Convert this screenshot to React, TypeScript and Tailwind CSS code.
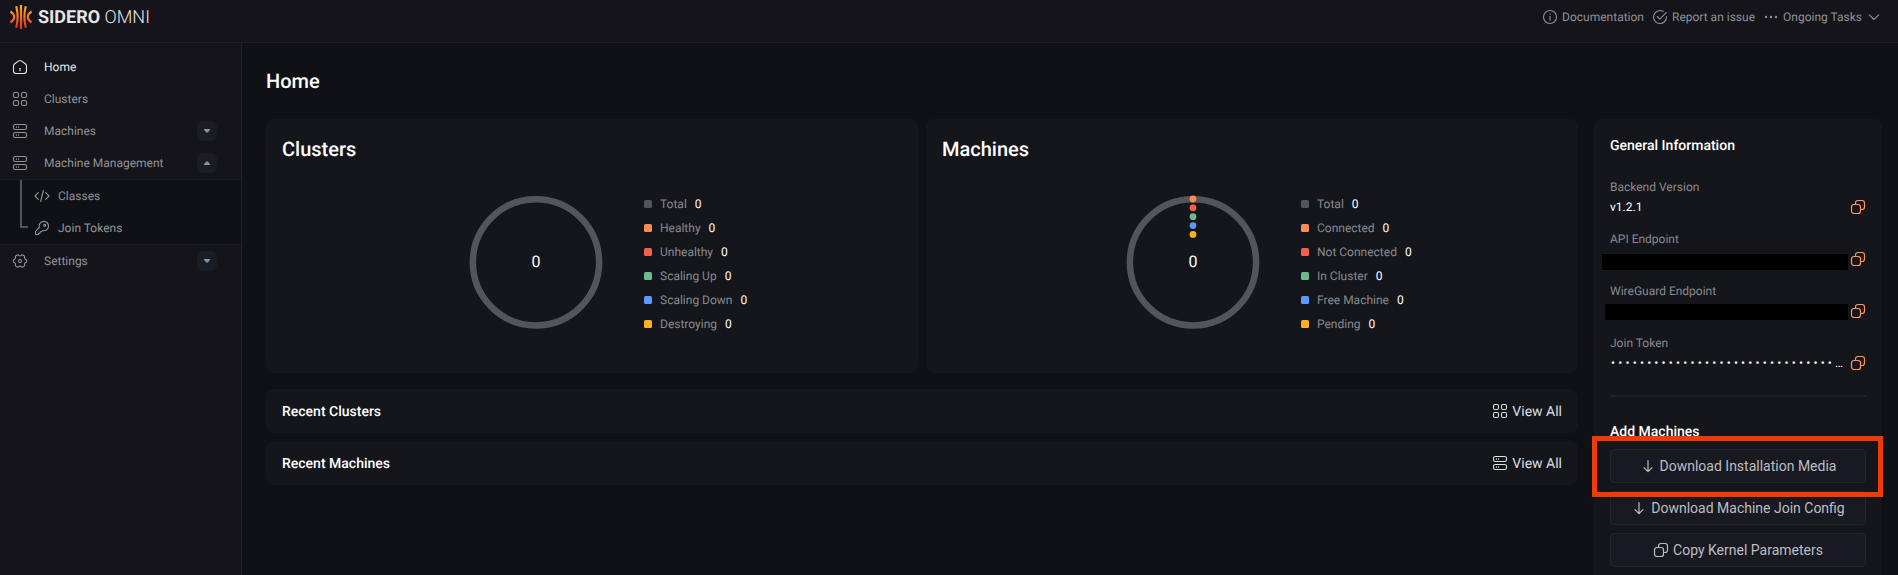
import type { ReactNode } from "react";

type IconProps = { className?: string };

function Svg({ className = "size-4", children, sw = 1.1 }: { className?: string; children: ReactNode; sw?: number }) {
  return (
    <svg viewBox="0 0 16 16" className={`shrink-0 ${className}`} fill="none" stroke="currentColor" strokeWidth={sw} strokeLinecap="round" strokeLinejoin="round">
      {children}
    </svg>
  );
}

const HomeIcon = ({ className }: IconProps) => (
  <Svg className={className}>
    <path d="M1.500 7.200c0-1 .4-1.800 1.200-2.400L6.400 2.100c1-.7 2.200-.7 3.200 0l3.700 2.700c.8.6 1.200 1.400 1.200 2.400v4.600c0 1.600-1.100 2.700-2.700 2.700H4.200c-1.600 0-2.700-1.100-2.700-2.700z" />
    <path d="M8 9.300v2.400" />
  </Svg>
);
const GridIcon = ({ className }: IconProps) => (
  <Svg className={className}>
    <rect x="1.500" y="1.500" width="5" height="5" rx="1.400" />
    <rect x="9.500" y="1.500" width="5" height="5" rx="1.400" />
    <rect x="1.500" y="9.500" width="5" height="5" rx="1.400" />
    <rect x="9.500" y="9.500" width="5" height="5" rx="1.400" />
  </Svg>
);
const ServerIcon = ({ className }: IconProps) => (
  <Svg className={className}>
    <rect x="1.500" y="1.500" width="13" height="5" rx="1.800" />
    <rect x="1.500" y="9.500" width="13" height="5" rx="1.800" />
    <path d="M4.500 3.700v.6M6.500 3.700v.6M4.500 11.700v.6M6.500 11.700v.6" />
  </Svg>
);
const CodeIcon = ({ className }: IconProps) => (
  <Svg className={className}>
    <path d="M4.300 4.700 1 8l3.300 3.300M11.700 4.700 15 8l-3.300 3.300M9.300 2.500l-2.600 11" />
  </Svg>
);
const KeyIcon = ({ className }: IconProps) => (
  <Svg className={className}>
    <path d="M5.300 7.300a4.700 4.700 0 1 1 3.300 3.300L7.500 11.700H6v1.500H4.500v1c0 .2-.1.300-.3.300H2c-.3 0-.5-.2-.5-.5v-2.200c0-.3.100-.5.300-.7z" />
    <circle cx="10.700" cy="5.300" r="1" />
  </Svg>
);
const GearIcon = ({ className }: IconProps) => (
  <Svg className={className}>
    <path d="M5.200 2.100c.6-.4 1.200-.3 1.600.2.700.7 1.700.7 2.400 0 .4-.5 1-.6 1.600-.2l1.200.7c.6.400.8.900.6 1.600-.2.900.3 1.700 1.200 2 .6.200.9.600.9 1.200v.8c0 .6-.3 1-.9 1.200-.9.300-1.400 1.100-1.200 2 .2.700 0 1.200-.6 1.600l-1.200.7c-.6.400-1.200.3-1.600-.2-.7-.7-1.700-.7-2.400 0-.4.500-1 .6-1.600.2L4 13.200c-.6-.4-.8-.9-.6-1.600.2-.9-.3-1.700-1.200-2-.6-.2-.9-.6-.9-1.200v-.8c0-.6.300-1 .9-1.200.9-.3 1.400-1.100 1.200-2-.2-.7 0-1.200.6-1.600z" />
    <circle cx="8" cy="8" r="1.500" />
  </Svg>
);
const InfoIcon = ({ className }: IconProps) => (
  <Svg className={className}>
    <circle cx="8" cy="8" r="6.500" />
    <path d="M8 7.200v4M8 4.800v.2" />
  </Svg>
);
const CheckIcon = ({ className }: IconProps) => (
  <Svg className={className}>
    <path d="M14.500 7.600A6.500 6.500 0 1 1 11.300 2.400" />
    <path d="m5.200 7.500 2.600 2.600 6.400-6.500" />
  </Svg>
);
const DotsIcon = ({ className }: IconProps) => (
  <Svg className={className}>
    <g fill="currentColor" stroke="none">
      <circle cx="3" cy="8" r="1.200" />
      <circle cx="8" cy="8" r="1.200" />
      <circle cx="13" cy="8" r="1.200" />
    </g>
  </Svg>
);
const ChevronIcon = ({ className }: IconProps) => (
  <Svg className={className}>
    <path d="m3.300 5.800 4.700 4.700 4.700-4.700" />
  </Svg>
);
const CopyIcon = ({ className }: IconProps) => (
  <Svg className={className} sw={1.2}>
    <rect x="1.500" y="5.500" width="9" height="9" rx="2.600" />
    <path d="M5.500 5.300V4c0-1.500 1-2.500 2.500-2.500h4c1.500 0 2.500 1 2.500 2.500v4c0 1.500-1 2.500-2.500 2.500h-1.300" />
  </Svg>
);
const DownIcon = ({ className }: IconProps) => (
  <Svg className={className} sw={1.2}>
    <path d="M8 2.500v11M4 9.700l4 4 4-4" />
  </Svg>
);

function Logo() {
  return (
    <svg viewBox="0 0 24 24" className="size-6 shrink-0" fill="none" strokeWidth="2.200">
      <defs>
        <linearGradient id="flame" gradientUnits="userSpaceOnUse" x1="0" y1="0" x2="0" y2="24">
          <stop offset="0" stopColor="#ffb31a" />
          <stop offset="0.500" stopColor="#f3722b" />
          <stop offset="1" stopColor="#dc2a2a" />
        </linearGradient>
      </defs>
      <g stroke="url(#flame)">
        <path d="M11.990 0 12.010 24" />
        <path d="M7.200 1.300C9 8 9 16 7.200 22.700" />
        <path d="M16.800 1.300C15 8 15 16 16.800 22.700" />
        <path d="M1.400 6.500C6.500 9.700 6.500 14.300 1.400 17.500" />
        <path d="M22.600 6.500C17.500 9.700 17.500 14.300 22.600 17.500" />
      </g>
    </svg>
  );
}

function Toggle({ up }: { up?: boolean }) {
  return (
    <span className="flex size-5 items-center justify-center rounded-md bg-[#1b1d26] text-[#8f9096]">
      <svg viewBox="0 0 6 4" className="h-1 w-1.5" fill="currentColor">
        {up ? <path d="M3 0 6 3v1H0V3z" /> : <path d="M0 0h6v1L3 4 0 1z" />}
      </svg>
    </span>
  );
}

function NavItem({ icon, label, active, toggle }: { icon: ReactNode; label: string; active?: boolean; toggle?: "up" | "down" }) {
  return (
    <a className={`flex h-8 items-center pr-6 pl-3 ${active ? "text-[#e4e4e6]" : "text-[#939398]"}`}>
      {icon}
      <span className="ml-4 flex-1">{label}</span>
      {toggle && <Toggle up={toggle === "up"} />}
    </a>
  );
}

type Entry = { label: string; color: string };

const clusterEntries: Entry[] = [
  { label: "Total", color: "bg-[#54555b]" },
  { label: "Healthy", color: "bg-[#f98b54]" },
  { label: "Unhealthy", color: "bg-[#f45e4c]" },
  { label: "Scaling Up", color: "bg-[#6db88d]" },
  { label: "Scaling Down", color: "bg-[#5b98ff]" },
  { label: "Destroying", color: "bg-[#fbb021]" },
];
const machineEntries: Entry[] = [
  { label: "Total", color: "bg-[#54555b]" },
  { label: "Connected", color: "bg-[#f98b54]" },
  { label: "Not Connected", color: "bg-[#f45e4c]" },
  { label: "In Cluster", color: "bg-[#6db88d]" },
  { label: "Free Machine", color: "bg-[#5b98ff]" },
  { label: "Pending", color: "bg-[#fbb021]" },
];
const dotColors = ["#f98b54", "#f45e4c", "#6db88d", "#5b98ff", "#fbb021"];

function StatCard({ title, entries, dots, pad }: { title: string; entries: Entry[]; dots?: boolean; pad: string }) {
  return (
    <section className="flex h-[254px] flex-1 flex-col rounded-lg bg-[#15161b] px-4 pt-4">
      <h2 className="text-xl leading-7 font-medium text-white">{title}</h2>
      <div className={`mt-[29px] flex items-start ${pad}`}>
        <div className="relative mt-[3px] flex size-[134px] items-center justify-center">
          <svg viewBox="0 0 134 134" className="absolute inset-0 size-full">
            <circle cx="67" cy="67.300" r="63.100" fill="none" stroke="#54555b" strokeWidth="6.500" />
            {dots && dotColors.map((c, i) => <circle key={c} cx="67" cy={4 + i * 8.85} r="3.400" fill={c} />)}
          </svg>
          <span className="relative text-base text-white">0</span>
        </div>
        <ul className="ml-[41px] text-xs">
          {entries.map((e) => (
            <li key={e.label} className="flex h-6 items-center">
              <span className={`size-2 rounded-[1.500px] ${e.color}`} />
              <span className="ml-2 text-[#88898f]">{e.label}</span>
              <span className="ml-2 text-white">0</span>
            </li>
          ))}
        </ul>
      </div>
    </section>
  );
}

function RecentBar({ title, icon }: { title: string; icon: ReactNode }) {
  return (
    <section className="flex h-11 items-center justify-between rounded-lg bg-[#15161b] px-4">
      <h3 className="pt-0.5 text-sm font-medium text-white">{title}</h3>
      <a className="flex items-center gap-1 text-sm text-[#dedee0]">
        {icon}
        <span className="pt-0.5">View All</span>
      </a>
    </section>
  );
}

function InfoRow({ label, children }: { label: string; children: ReactNode }) {
  return (
    <div className="h-[52px] text-xs">
      <div className="h-5 leading-5 text-[#88898f]">{label}</div>
      <div className="flex h-5 items-center justify-between leading-5 text-white">
        <div className="min-w-0">{children}</div>
        <CopyIcon className="size-4 text-[#ff945c]" />
      </div>
    </div>
  );
}

function ActionButton({ icon, children }: { icon: ReactNode; children: ReactNode }) {
  return (
    <button className="flex h-[34px] w-full items-center justify-center gap-1 rounded border border-[#22232b] bg-[#191a21] text-sm text-[#bdbdc1]">
      {icon}
      {children}
    </button>
  );
}

export default function App() {
  return (
    <div className="flex h-[575px] w-[1898px] flex-col overflow-hidden bg-[#101116] font-['Roboto',sans-serif] [text-rendering:geometricPrecision]">
      <header className="flex h-[43px] shrink-0 items-center justify-between border-b border-[#1e1f26] bg-[#15141a] pr-4 pb-[9px] pl-[9px]">
        <div className="flex items-center gap-[5px] text-[#e6e6e8]">
          <Logo />
          <div className="pt-0.5 text-lg leading-6">
            <span className="font-bold">SIDERO</span> <span className="font-light">OMNI</span>
          </div>
        </div>
        <nav className="flex items-center text-xs text-[#8f9096]">
          <InfoIcon className="size-4" />
          <span className="ml-1">Documentation</span>
          <CheckIcon className="ml-2 size-4" />
          <span className="ml-1">Report an issue</span>
          <DotsIcon className="ml-2 size-4" />
          <span className="ml-1">Ongoing Tasks</span>
          <ChevronIcon className="ml-1 size-4" />
        </nav>
      </header>

      <div className="flex min-h-0 flex-1">
        <aside className="w-[242px] shrink-0 border-r border-[#1e1f26] bg-[#15141a] pt-2 text-xs">
          <NavItem icon={<HomeIcon />} label="Home" active />
          <NavItem icon={<GridIcon />} label="Clusters" />
          <NavItem icon={<ServerIcon />} label="Machines" toggle="down" />
          <NavItem icon={<ServerIcon />} label="Machine Management" toggle="up" />
          <div className="flex h-[66px] border-y border-[#1e1f26] bg-[#101116] text-[#939398]">
            <div className="ml-5 h-12 w-2 border-b-2 border-l-2 border-[#54555b]" />
            <div className="ml-1.5">
              <a className="flex h-8 items-center gap-2">
                <CodeIcon /> Classes
              </a>
              <a className="flex h-8 items-center gap-2">
                <KeyIcon /> Join Tokens
              </a>
            </div>
          </div>
          <NavItem icon={<GearIcon />} label="Settings" toggle="down" />
        </aside>

        <main className="flex-1 pr-4 pl-6">
          <h1 className="mt-6 text-xl leading-7 font-medium text-white">Home</h1>
          <div className="mt-6 flex gap-4">
            <div className="flex flex-1 flex-col">
              <div className="mb-4 flex gap-2">
                <StatCard title="Clusters" entries={clusterEntries} pad="pl-[187px]" />
                <StatCard title="Machines" entries={machineEntries} pad="pl-[184px]" dots />
              </div>
              <div className="flex flex-col gap-2">
                <RecentBar title="Recent Clusters" icon={<GridIcon />} />
                <RecentBar title="Recent Machines" icon={<ServerIcon />} />
              </div>
            </div>

            <aside className="relative h-[480px] w-72 rounded-lg bg-[#15161b] px-4 pt-[17px]">
              <h3 className="text-sm leading-5 font-medium text-white">General Information</h3>
              <div className="mt-[21px]">
                <InfoRow label="Backend Version">v1.2.1</InfoRow>
                <InfoRow label="API Endpoint">
                  <div className="mt-[5px] -ml-2 h-4 w-[246px] bg-black" />
                </InfoRow>
                <InfoRow label="WireGuard Endpoint">
                  <div className="mt-0.5 -ml-[5px] h-4 w-[243px] bg-black" />
                </InfoRow>
                <InfoRow label="Join Token">
                  <div className="whitespace-nowrap">
                    <span className="ml-px tracking-[0.265em]">{"•".repeat(31)}</span>…
                  </div>
                </InfoRow>
              </div>
              <hr className="mt-[10px] border-t-2 border-[#1d1e26]" />
              <h3 className="mt-[25px] text-sm leading-5 font-medium text-white">Add Machines</h3>
              <div className="mt-[7px] flex flex-col gap-2">
                <ActionButton icon={<DownIcon />}>Download Installation Media</ActionButton>
                <ActionButton icon={<DownIcon />}>Download Machine Join Config</ActionButton>
                <ActionButton icon={<CopyIcon />}>Copy Kernel Parameters</ActionButton>
              </div>
              <div className="pointer-events-none absolute top-[317px] -left-0.5 h-[61px] w-[291px] border-5 border-[#f03a0c]" />
            </aside>
          </div>
        </main>
      </div>
    </div>
  );
}
